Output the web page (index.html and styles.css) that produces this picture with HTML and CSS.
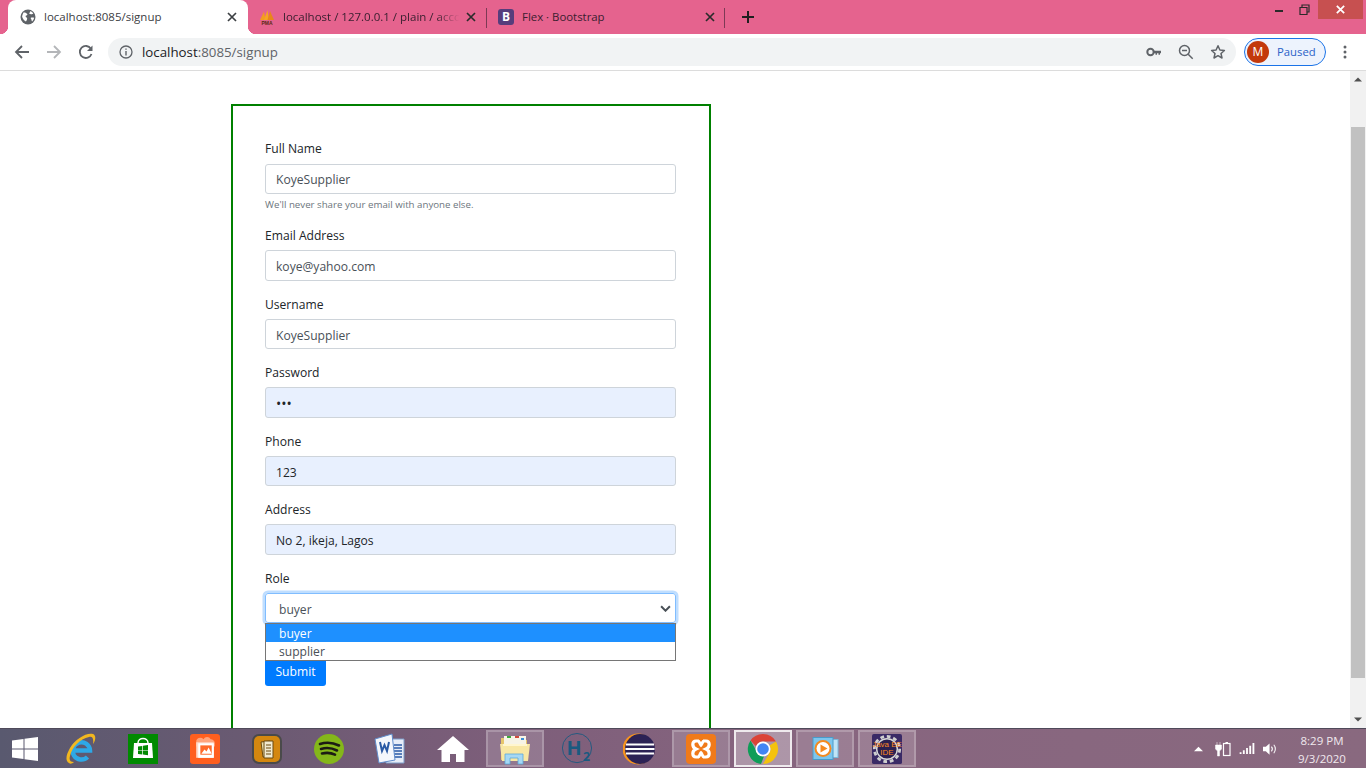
FILE: index.html
```html
<!DOCTYPE html>
<html lang="en">
<head>
<meta charset="utf-8">
<title>Signup</title>
<link rel="stylesheet" href="styles.css">
</head>
<body>
<header class="tabstrip">
  <div class="tab tab-active">
    <svg class="fav" viewBox="0 0 16 16"><circle cx="8" cy="8" r="7.500" fill="#5f6368"/><path d="M3.500 3.500c1.500-.3 3 .4 3.800 1.600.4.900-.4 1.500-1.300 1.500-.8.500-.3 1.500.5 2 .8.400.8 1.200.4 2.200-.3.700-.6 1.400-1 1.800-1.500-.8-3.200-2.700-3.800-4.800C2.400 6.200 2.800 4.600 3.500 3.500zM10.300 2.100c1.200.5 2.300 1.500 3 2.600l-1.600.6c-.7-.1-1.300-.5-2-.3-.6-.4-.4-1.100.1-1.500.3-.3.500-.8.500-1.400zM10.800 8.700c1-.3 2.200-.2 3.300.1-.2 1.300-.9 2.700-2 3.600-.6-.5-.4-1.400-.7-2-.4-.5-.8-1.100-.6-1.700z" fill="#fff"/></svg>
    <span class="tab-title">localhost:8085/signup</span>
    <svg class="close" viewBox="0 0 16 16"><path d="M4 4l8 8M12 4l-8 8"/></svg>
  </div>
  <div class="tab tab-sep">
    <svg class="fav" viewBox="0 0 16 16"><path d="M1 11 5 2.500 6.500 11z" fill="#f39c1f"/><path d="M5 11 8.500 1 10 11z" fill="#f5a623"/><path d="M8.500 11 11 2 15 11z" fill="#e8871a"/><text x="8" y="15.500" class="pma">PMA</text></svg>
    <span class="tab-title tab-fade">localhost / 127.0.0.1 / plain / acco</span>
    <svg class="close" viewBox="0 0 16 16"><path d="M4 4l8 8M12 4l-8 8"/></svg>
  </div>
  <div class="tab tab-sep tab-last">
    <span class="bs-logo">B</span>
    <span class="tab-title">Flex · Bootstrap</span>
    <svg class="close" viewBox="0 0 16 16"><path d="M4 4l8 8M12 4l-8 8"/></svg>
  </div>
  <svg class="newtab" viewBox="0 0 16 16"><path d="M8 2v12M2 8h12"/></svg>
  <div class="winctl">
    <svg class="winbtn" viewBox="0 0 26 19"><rect x="9" y="10" width="8" height="2" fill="#2a2a2a"/></svg>
    <svg class="winbtn" viewBox="0 0 26 19"><path d="M8 7.500h7v7H8zM10 7V5h7v7h-1.500" fill="none" stroke="#2a2a2a" stroke-width="1.200"/></svg>
    <div class="winclose"><svg viewBox="0 0 16 16"><path d="M3.500 3.500l9 9M12.500 3.500l-9 9"/></svg></div>
  </div>
</header>

<nav class="toolbar">
  <svg class="navicon" viewBox="0 0 16 16"><path d="M15 8H2M8 2 2 8l6 6" fill="none" stroke="#5f6368" stroke-width="1.800"/></svg>
  <svg class="navicon" viewBox="0 0 16 16"><path d="M1 8h13M8 2l6 6-6 6" fill="none" stroke="#b4b6b9" stroke-width="1.800"/></svg>
  <svg class="navicon navicon-last" viewBox="0 0 16 16"><path d="M13.500 10a6 6 0 1 1-.6-5.300" fill="none" stroke="#5f6368" stroke-width="1.800"/><path d="M14.500 1.500v5.500H9z" fill="#5f6368"/></svg>
  <div class="omnibox">
    <svg class="info" viewBox="0 0 14 14"><circle cx="7" cy="7" r="6" fill="none" stroke="#5f6368" stroke-width="1.300"/><path d="M7 6v4.500M7 3.500v1.300" stroke="#5f6368" stroke-width="1.400"/></svg>
    <span class="url"><span class="url-host">localhost</span>:8085/signup</span>
    <svg class="omni-key" viewBox="0 0 16 16"><circle cx="4.500" cy="8" r="3.200" fill="none" stroke="#5f6368" stroke-width="2"/><path d="M7.500 6.800H15v2.400h-1v1.500h-1.500V9.200H11v1.500H9.500V9.200h-2z" fill="#5f6368"/></svg>
    <svg class="omni-icon" viewBox="0 0 16 16"><circle cx="6.500" cy="6.500" r="5" fill="none" stroke="#5f6368" stroke-width="1.500"/><path d="M4 6.500h5M10.200 10.200l4.500 4.500" stroke="#5f6368" stroke-width="1.500"/></svg>
    <svg class="omni-icon" viewBox="0 0 16 16"><path d="M8 1.800l1.900 4.200 4.500.5-3.400 3 1 4.500L8 11.700 4 14l1-4.500-3.400-3 4.500-.5z" fill="none" stroke="#5f6368" stroke-width="1.500" stroke-linejoin="round"/></svg>
  </div>
  <div class="profile"><span class="avatar">M</span><span class="paused">Paused</span></div>
  <svg class="dots" viewBox="0 0 4 16"><circle cx="2" cy="3" r="1.500"/><circle cx="2" cy="8" r="1.500"/><circle cx="2" cy="13" r="1.500"/></svg>
</nav>

<div class="viewport">
  <main class="page">
    <form class="card">
      <div class="group group-help">
        <div class="label label-first">Full Name</div>
        <div class="input">KoyeSupplier</div>
        <div class="help">We'll never share your email with anyone else.</div>
      </div>
      <div class="group">
        <div class="label">Email Address</div>
        <div class="input">koye@yahoo.com</div>
      </div>
      <div class="group">
        <div class="label">Username</div>
        <div class="input">KoyeSupplier</div>
      </div>
      <div class="group">
        <div class="label">Password</div>
        <div class="input input-auto input-dots">•••</div>
      </div>
      <div class="group">
        <div class="label">Phone</div>
        <div class="input input-auto">123</div>
      </div>
      <div class="group">
        <div class="label">Address</div>
        <div class="input input-auto">No 2, ikeja, Lagos</div>
      </div>
      <div class="group group-role">
        <div class="label">Role</div>
        <div class="select">
          <span class="select-value">buyer</span>
          <svg class="chev" viewBox="0 0 10 6"><path d="M1 1l4 4 4-4" fill="none" stroke="#495057" stroke-width="1.800"/></svg>
          <div class="listbox">
            <div class="option option-on">buyer</div>
            <div class="option">supplier</div>
          </div>
        </div>
      </div>
      <div class="submit">Submit</div>
    </form>
  </main>
  <aside class="scrollbar">
    <svg class="sb-arrow" viewBox="0 0 16 17"><path d="M4 10.500 8 6.500l4 4z" fill="#505050"/></svg>
    <div class="sb-track"><div class="sb-thumb"></div></div>
    <svg class="sb-arrow" viewBox="0 0 16 17"><path d="M4 6.500 8 10.500l4-4z" fill="#505050"/></svg>
  </aside>
</div>

<footer class="taskbar">
  <div class="start"><svg class="i26" viewBox="0 0 26 26"><path d="M0 4.500 11.500 3v9.500H0zM12.500 2.800 26 1v11.500H12.500zM0 13.500h11.500V23L0 21.500zM12.500 13.500H26V25l-13.500-1.800z" fill="#fff"/></svg></div>
  <div class="tb"><svg class="i32" viewBox="0 0 32 32"><path d="M7.500 17.500H25a8.700 8.700 0 1 0-2.500 6.500" fill="none" stroke="#2ea8e6" stroke-width="4.500"/><path d="M4 30C0 28 1 22 5 15 10 6 22-1 28 1c3 1 3 6 0 10 1-6-1-8-4-7C15 6 7 14 5 23c-1 4 0 6 4 6-2 2-4 2-5 1z" fill="#f2b71f"/></svg></div>
  <div class="tb"><div class="store"><svg viewBox="0 0 30 30"><path d="M10 9c0-6 10-6 10 0" fill="none" stroke="#fff" stroke-width="1.500"/><path d="M6 9h18l1 15H5z" fill="#fff"/><path d="M10 12.500l4.300-.6v4H10zM15 11.800l5-.7v4.800h-5zM10 16.500h4.300v4L10 20zM15 16.500h5v4.800l-5-.7z" fill="#008a00"/></svg></div></div>
  <div class="tb"><div class="photos"><svg viewBox="0 0 29 29"><path d="M6 8a4 4 0 0 1 7-3 4 4 0 0 1 7 0 4 4 0 0 1 4 4v3H6z" fill="#ffa47c"/><rect x="6" y="8" width="17" height="15" fill="#ffd9c8"/><rect x="8" y="9" width="15" height="14" fill="#fff"/><rect x="10" y="11" width="11" height="9" fill="#ff6a2a"/><path d="M11 19l3-4 2 2 2-4 3 6z" fill="#fff"/></svg></div></div>
  <div class="tb"><div class="notes"><svg viewBox="0 0 30 30"><rect width="30" height="30" rx="7" fill="#4a4a4a"/><rect x="2" y="2" width="26" height="26" rx="5" fill="#d4870f"/><path d="M9 8l9-1 2 15-9 1z" fill="#e9dfae" stroke="#6a4a10"/><path d="M12 7h9v17h-9z" fill="#f1ead0" stroke="#6a4a10"/><path d="M14 11h5M14 14h5M14 17h5M14 20h5" stroke="#6a4a10"/></svg></div></div>
  <div class="tb"><svg class="i30" viewBox="0 0 30 30"><circle cx="15" cy="15" r="15" fill="#84b71a"/><path d="M6 10c6-2 13-1.500 19 1.500M7 15c5-1.500 11-1 16 1.500M8 19.500c4-1 9-.8 13 1.200" fill="none" stroke="#1c1c14" stroke-width="2.600" stroke-linecap="round"/></svg></div>
  <div class="tb tb-word"><svg class="i32" viewBox="0 0 32 32"><path d="M12 6h18v24H12z" fill="#e6edf8" stroke="#7d9cc9"/><path d="M20 12h8M20 15h8M20 18h8M20 21h8M20 24h8" stroke="#2a5aa5" stroke-width="1.300"/><path d="M1 6 18 1l3 26-16 3z" fill="#f4f7fc" stroke="#5f8ccb"/><path d="M6 9l2 9 2.500-6 2.500 6 2-9" fill="none" stroke="#2a5aa5" stroke-width="2"/></svg></div>
  <div class="tb"><svg class="i32" viewBox="0 0 32 32"><path d="M16 3 0 17h4.500v12h8.500v-8h6v8h8.500V17H32z" fill="#fff"/></svg></div>
  <div class="tb tb-open"><svg class="i32" viewBox="0 0 32 32"><path d="M2 5h11l2 2h13v20H2z" fill="#e6c66c"/><rect x="5" y="3" width="22" height="9" fill="#f7f4e6"/><rect x="8" y="3" width="4" height="2" fill="#3ca83c"/><rect x="16" y="3" width="4" height="2" fill="#d04a3a"/><rect x="22" y="5" width="3" height="2" fill="#3b8fd8"/><path d="M1 11h30l-2 17H3z" fill="#f8e7a4"/><path d="M4 12h24" stroke="#fff6cf" stroke-width="2"/><path d="M6 21h18v10h-5v-6h-8v6H6z" fill="#a6d8f4" stroke="#5aa9da" stroke-width=".8"/></svg></div>
  <div class="tb"><svg class="i32" viewBox="0 0 34 34"><circle cx="17" cy="16" r="15.500" fill="none" stroke="#1f5a80" stroke-width="1"/><text x="14" y="23" class="h2-h">H</text><text x="27" y="30" class="h2-sub">2</text></svg></div>
  <div class="tb"><svg class="i32" viewBox="0 0 32 32"><circle cx="15" cy="16" r="15.500" fill="#f7941e"/><circle cx="17" cy="16" r="15" fill="#2c2255"/><path d="M3 11.500h28M2.500 16h29M3 20.500h28" stroke="#fff" stroke-width="2"/></svg></div>
  <div class="tb tb-open"><div class="xampp"><svg viewBox="0 0 30 30"><path d="M13 7H10C6 7 5.500 13 10 15 5.500 17 6 23 10 23h3M17 7h3c4 0 4.500 6 0 8 4.500 2 4 8 0 8h-3M12 7c1.500 0 2 3 3 4 1-1 1.500-4 3-4M12 23c1.500 0 2-3 3-4 1 1 1.500 4 3 4" fill="none" stroke="#fff" stroke-width="3.200"/></svg></div></div>
  <div class="tb tb-open tb-active"><svg class="i32" viewBox="0 0 32 32"><path d="M16 1a15 15 0 0 1 13 7.500H16a7.500 7.500 0 0 0-7 4.700L3.500 7.500A15 15 0 0 1 16 1z" fill="#db4437"/><path d="M29 8.500A15 15 0 0 1 16 31l6.500-11.200A7.500 7.500 0 0 0 22.500 12.500z" fill="#f4c20d"/><path d="M3.500 7.500 9.800 18.500a7.500 7.500 0 0 0 7.500 4L14 31A15 15 0 0 1 3.500 7.500z" fill="#0f9d58"/><circle cx="16" cy="16" r="7.500" fill="#fff"/><circle cx="16" cy="16" r="5.800" fill="#4285f4"/></svg></div>
  <div class="tb tb-open"><svg class="wmp" viewBox="0 0 27 23"><rect x="6" y="2.500" width="20" height="18" fill="#bfe4f7" stroke="#7ab8da"/><rect x="1" y=".5" width="20" height="22" fill="#7cc6ee" stroke="#4a9bc9"/><circle cx="11" cy="11.500" r="8.500" fill="#f58a1f"/><circle cx="11" cy="11.500" r="6.500" fill="#fff"/><path d="M8.500 7.500l7 4-7 4z" fill="#f58a1f"/></svg></div>
  <div class="tb tb-open"><div class="jee"><svg viewBox="0 0 32 32"><rect width="32" height="32" rx="2" fill="#3a2a66"/><circle cx="16" cy="16" r="13.500" fill="none" stroke="#cfcfcf" stroke-width="3" stroke-dasharray="4 3"/><circle cx="16" cy="16" r="11" fill="#2c2050" stroke="#d8d8d8" stroke-width="1.500"/><text x="16" y="13.500" class="jee-t">Java EE</text><text x="16" y="22" class="jee-t">IDE</text></svg></div></div>
  <div class="tray">
    <svg class="tray-caret" viewBox="0 0 10 6"><path d="M0 5.500 5 .5l5 5z" fill="#fff"/></svg>
    <svg class="tray-power" viewBox="0 0 16 16"><path d="M2 1v3M5 1v3M.5 4h6v4l-2 2v5h-2v-5l-2-2z" fill="#fff" stroke="#fff" stroke-width=".5"/><rect x="8.500" y="2.500" width="6.500" height="12" fill="none" stroke="#fff" stroke-width="1.200"/><rect x="10.500" y="1" width="2.500" height="1.500" fill="#fff"/></svg>
    <svg class="tray-signal" viewBox="0 0 16 12"><path d="M0 10h2v2H0zM3.500 8h2v4h-2zM7 5.500h2V12H7zM10.500 3h2v9h-2zM14 0h2v12h-2z" fill="#fff"/></svg>
    <svg class="tray-sound" viewBox="0 0 16 14"><path d="M0 4.500h3L7 1v12L3 9.500H0z" fill="#fff"/><path d="M9 4.500c1.200 1.500 1.200 3.500 0 5M11.500 2.500c2.200 2.500 2.200 6.500 0 9" fill="none" stroke="#fff" stroke-width="1.100"/></svg>
    <div class="clock"><div>8:29 PM</div><div>9/3/2020</div></div>
  </div>
</footer>
</body>
</html>
```

FILE: styles.css
```css
* { box-sizing: border-box; }
html, body { margin: 0; height: 100%; }
body {
  width: 1366px;
  height: 768px;
  overflow: hidden;
  display: flex;
  flex-direction: column;
  font-family: "Open Sans", "Noto Sans", "Liberation Sans", sans-serif;
  background: #fff;
}

/* tab strip */
.tabstrip {
  flex: 0 0 34px;
  height: 34px;
  display: flex;
  align-items: stretch;
  padding-left: 8px;
  background: #e5638e;
}
.tab {
  position: relative;
  width: 239px;
  display: flex;
  align-items: center;
  padding: 0 8px 0 11px;
  font-size: 11.500px;
  color: #3a2030;
}
.tab-active {
  width: 240px;
  padding-left: 12px;
  background: #fff;
  border-radius: 8px 8px 0 0;
  color: #3c4043;
}
.tab-active::before,
.tab-active::after {
  content: "";
  position: absolute;
  bottom: 0;
  width: 8px;
  height: 8px;
}
.tab-active::before {
  left: -8px;
  background: radial-gradient(circle at 0 0, #e5638e 8px, #fff 8.500px);
}
.tab-active::after {
  right: -8px;
  background: radial-gradient(circle at 100% 0, #e5638e 8px, #fff 8.500px);
}
.tab-sep::after {
  content: "";
  position: absolute;
  right: 0;
  top: 8px;
  height: 20px;
  width: 1px;
  background: #7d3a55;
}
.tab-last { width: 238px; padding-right: 7px; }
.fav { flex: 0 0 16px; width: 16px; height: 16px; margin-right: 8px; }
.pma { font: bold 5px "Liberation Sans", sans-serif; fill: #5a2a10; text-anchor: middle; }
.bs-logo {
  flex: 0 0 16px;
  height: 16px;
  margin-right: 8px;
  border-radius: 3px;
  background: #563d7c;
  color: #fff;
  font-size: 12px;
  font-weight: 700;
  line-height: 16px;
  text-align: center;
}
.tab-title { flex: 1; padding-bottom: 2px; white-space: nowrap; overflow: hidden; }
.tab-fade { -webkit-mask-image: linear-gradient(90deg, #000 85%, transparent 98%); mask-image: linear-gradient(90deg, #000 85%, transparent 98%); }
.tab-last .tab-title { font-size: 11.400px; }
.close { flex: 0 0 16px; width: 16px; height: 16px; }
.close path { stroke: #2b2b2b; stroke-width: 1.700; fill: none; }
.tab-active .close path { stroke: #3c4043; }
.newtab { width: 16px; height: 16px; margin: 9px 0 0 15px; }
.newtab path { stroke: #1f1f1f; stroke-width: 2; fill: none; }
.winctl { margin-left: auto; display: flex; align-items: flex-start; padding-right: 3px; }
.winbtn { width: 26px; height: 19px; }
.winclose {
  width: 45px;
  height: 19px;
  background: #c75050;
  display: flex;
  align-items: center;
  justify-content: center;
}
.winclose svg { width: 13px; height: 13px; }
.winclose path { stroke: #fff; stroke-width: 2.200; fill: none; }

/* toolbar */
.toolbar {
  flex: 0 0 37px;
  height: 37px;
  display: flex;
  align-items: flex-start;
  padding: 4px 0 0 14px;
  background: #fff;
  border-bottom: 1px solid #dcdcdc;
}
.navicon { width: 16px; height: 16px; margin: 6px 16px 0 0; }
.navicon-last { margin-right: 14px; }
.omnibox {
  width: 1128px;
  height: 28px;
  display: flex;
  align-items: center;
  padding: 0 10px 0 11px;
  border-radius: 14px;
  background: #f1f3f4;
}
.info { width: 14px; height: 14px; margin-right: 9px; }
.url { flex: 1; font-size: 13.300px; color: #5f6368; white-space: nowrap; }
.url-host { color: #202124; }
.omni-key { width: 16px; height: 16px; margin-right: 16px; }
.omni-icon { width: 16px; height: 16px; margin-right: 16px; }
.omni-icon:last-child { margin-right: 0; }
.profile {
  width: 82px;
  height: 28px;
  margin-left: 8px;
  display: flex;
  align-items: center;
  padding-left: 2px;
  border: 1px solid #1a73e8;
  border-radius: 14px;
  background: #edf3fd;
}
.avatar {
  width: 22px;
  height: 22px;
  border-radius: 50%;
  background: #c3390c;
  color: #fff;
  font-size: 12px;
  line-height: 22px;
  text-align: center;
}
.paused { margin-left: 8px; padding-bottom: 2px; font-size: 11.300px; color: #2a62c8; }
.dots { width: 4px; height: 16px; margin: 6px 0 0 17px; fill: #5f6368; }

/* page */
.viewport { flex: 1; min-height: 0; display: flex; }
.page { flex: 1; min-width: 0; overflow: hidden; padding: 33px 0 0 231px; }
.card {
  width: 480px;
  height: 720px;
  padding: 32px;
  border: 2px solid #008000;
  color: #212529;
  font-size: 12.100px;
  line-height: 19.200px;
}
.group { margin-bottom: 12.600px; }
.group-help { margin-bottom: 12.200px; }
.label { padding-top: 1.500px; padding-bottom: 4.900px; height: 25.600px; }
.label-first { padding-top: .5px; }
.input {
  width: 411px;
  height: 30.400px;
  padding: 5.800px 10px;
  border: 1px solid #ced4da;
  border-radius: 3px;
  color: #495057;
  background: #fff;
}
.input-auto { background: #e8f0fe; color: #212529; border-color: #ced4da; }
.input-dots { font-size: 14px; }
.help {
  margin-top: 4px;
  font-size: 9.700px;
  line-height: 14.400px;
  color: #6c757d;
}
.group-role { margin-bottom: 31.900px; }
.select {
  position: relative;
  width: 411px;
  height: 30.400px;
  display: flex;
  align-items: center;
  padding: 0 13px;
  border: 1px solid #80bdff;
  border-radius: 3px;
  box-shadow: 0 0 0 2.500px rgba(0, 123, 255, .25);
  color: #495057;
}
.select-value { padding-top: 2px; }
.chev { position: absolute; right: 4px; top: 11px; width: 11px; height: 7px; }
.listbox {
  position: absolute;
  z-index: 1;
  left: -1px;
  right: -1px;
  top: 29px;
  height: 38px;
  border: 1px solid #767676;
  background: #fff;
}
.option { height: 18px; padding: 1px 0 0 13px; line-height: 17px; }
.option-on { background: #1e90ff; color: #fff; }
.submit {
  width: 61px;
  height: 30.400px;
  padding-top: 1.500px;
  line-height: 30.400px;
  text-align: center;
  border-radius: 3px;
  background: #007bff;
  color: #fff;
}

/* scrollbar */
.scrollbar { flex: 0 0 16px; display: flex; flex-direction: column; background: #f1f1f1; }
.sb-arrow { width: 16px; height: 17px; flex: 0 0 17px; }
.sb-track { flex: 1; padding: 39px 1px 0; }
.sb-thumb { height: 551px; background: #c1c1c1; }

/* taskbar */
.taskbar {
  flex: 0 0 40px;
  height: 40px;
  display: flex;
  align-items: center;
  background: linear-gradient(90deg, #59596f 0, #6a5a72 250px, #7d5e7a 500px, #87657f 800px, #89697f 100%);
  border-top: 1px solid #4f4a5a;
}
.start { width: 50px; height: 39px; display: flex; align-items: center; justify-content: center; }
.tb { width: 62px; height: 39px; display: flex; align-items: center; justify-content: center; }
.tb-open { position: relative; }
.tb-open::before {
  content: "";
  position: absolute;
  inset: 1px 2px 1px;
  border: 2px solid rgba(255, 255, 255, .22);
  background: rgba(255, 255, 255, .16);
}
.tb-active::before { border-color: rgba(255, 255, 255, .8); background: rgba(255, 255, 255, .32); }
.tb > * { position: relative; }
.tb-word svg { margin-left: -2px; }
.i26 { width: 26px; height: 26px; }
.i30 { width: 30px; height: 30px; }
.i32 { width: 32px; height: 32px; }
.wmp { width: 27px; height: 23px; }
.store, .notes, .xampp, .jee, .photos { width: 30px; height: 30px; }
.store svg, .notes svg, .xampp svg, .jee svg, .photos svg { display: block; width: 100%; height: 100%; }
.store { background: #008a00; }
.photos { background: #ff5f1f; border-radius: 3px; }
.xampp { background: #f07a1a; border-radius: 4px; }
.h2-h { font: bold 21px "Open Sans", sans-serif; fill: #1a5a80; text-anchor: middle; }
.h2-sub { font: bold 13px "Open Sans", sans-serif; fill: #1a5a80; text-anchor: middle; }
.jee-t { font: 8.500px "Liberation Sans", sans-serif; fill: #ff8a1e; text-anchor: middle; }
.tray { margin-left: auto; display: flex; align-items: center; color: #f0e8ee; }
.tray-caret { width: 9px; height: 6px; margin-right: 12px; }
.tray-power { width: 16px; height: 16px; margin-right: 8px; }
.tray-signal { width: 16px; height: 11px; margin-right: 8px; }
.tray-sound { width: 15px; height: 14px; }
.clock { width: 88px; padding-top: 2px; text-align: center; font-size: 11.500px; line-height: 18px; }
```
